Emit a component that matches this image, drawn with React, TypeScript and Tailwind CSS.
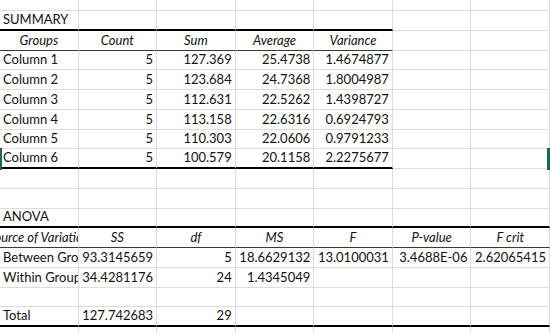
import React from 'react';

type Line = 'grid' | 'thick' | 'thin';
type Align = 'left' | 'right' | 'center';

type Row = {
  cells: string[];
  align?: Align[];
  italic?: boolean;
  // bottom border style for the first `span` columns, rest get a normal gridline
  line?: Line;
  span?: number;
};

const SUMMARY_ROWS: Array<[string, string, string, string, string]> = [
  ['Column 1', '5', '127.369', '25.4738', '1.4674877'],
  ['Column 2', '5', '123.684', '24.7368', '1.8004987'],
  ['Column 3', '5', '112.631', '22.5262', '1.4398727'],
  ['Column 4', '5', '113.158', '22.6316', '0.6924793'],
  ['Column 5', '5', '110.303', '22.0606', '0.9791233'],
  ['Column 6', '5', '100.579', '20.1158', '2.2275677'],
];

const NUM: Align[] = ['left', 'right', 'right', 'right', 'right', 'right', 'right'];
const MID: Align[] = ['center', 'center', 'center', 'center', 'center', 'center', 'center'];

const ROWS: Row[] = [
  { cells: ['SUMMARY'], line: 'thick', span: 5 },
  { cells: ['Groups', 'Count', 'Sum', 'Average', 'Variance'], align: MID, italic: true, line: 'thin', span: 5 },
  ...SUMMARY_ROWS.map((r, i) => ({
    cells: [...r],
    align: NUM,
    line: (i === SUMMARY_ROWS.length - 1 ? 'thick' : 'grid') as Line,
    span: 5,
  })),
  { cells: [] },
  { cells: [] },
  { cells: ['ANOVA'], line: 'thick', span: 7 },
  {
    cells: ['Source of Variation', 'SS', 'df', 'MS', 'F', 'P-value', 'F crit'],
    align: MID,
    italic: true,
    line: 'thin',
    span: 7,
  },
  {
    cells: ['Between Groups', '93.3145659', '5', '18.6629132', '13.0100031', '3.4688E-06', '2.62065415'],
    align: NUM,
  },
  { cells: ['Within Groups', '34.4281176', '24', '1.4345049'], align: NUM },
  { cells: [] },
  { cells: ['Total', '127.742683', '29'], align: NUM, line: 'thick', span: 7 },
];

function Cell({ text, align = 'left', italic, line }: { text?: string; align?: Align; italic?: boolean; line: Line }) {
  const border =
    line === 'thick'
      ? 'border-b-2 border-b-black'
      : line === 'thin'
        ? 'border-b border-b-[#3a3a3a]'
        : 'border-b border-b-[#dcdcdc]';
  const justify = align === 'right' ? 'justify-end' : align === 'center' ? 'justify-center' : 'justify-start';
  return (
    <div
      className={`flex h-full items-end overflow-hidden whitespace-nowrap border-r border-r-[#dcdcdc] px-[3px] pb-[1px] ${border} ${justify}`}
    >
      {text && <span className={`shrink-0 leading-[17px] ${italic ? 'italic' : ''}`}>{text}</span>}
    </div>
  );
}

export default function App() {
  return (
    <div
      className="relative h-[333px] w-[550px] overflow-hidden bg-white text-[13px] text-[#111]"
      style={{ fontFamily: 'Lato, "Open Sans", sans-serif' }}
    >
      {/* partial row cut off at the top */}
      <div className="grid h-[11px] grid-cols-7">
        {Array.from({ length: 7 }).map((_, i) => (
          <div key={i} className="border-b border-r border-[#dcdcdc]" />
        ))}
      </div>

      {ROWS.map((row, r) => (
        <div key={r} className="grid h-[19.75px] grid-cols-7">
          {Array.from({ length: 7 }).map((_, c) => (
            <Cell
              key={c}
              text={row.cells[c]}
              align={row.align?.[c]}
              italic={row.italic}
              line={row.line && c < (row.span ?? 7) ? row.line : 'grid'}
            />
          ))}
        </div>
      ))}

      {/* partial row cut off at the bottom */}
      <div className="grid h-[10px] grid-cols-7">
        {Array.from({ length: 7 }).map((_, i) => (
          <div key={i} className="border-r border-[#dcdcdc]" />
        ))}
      </div>

      {/* selection edges from cells outside the view */}
      <div className="absolute left-0 top-[148px] h-[22px] w-[2px] bg-[#1d6b45]" />
      <div className="absolute right-0 top-[148px] h-[22px] w-[3px] bg-[#1d6b45]" />
    </div>
  );
}
